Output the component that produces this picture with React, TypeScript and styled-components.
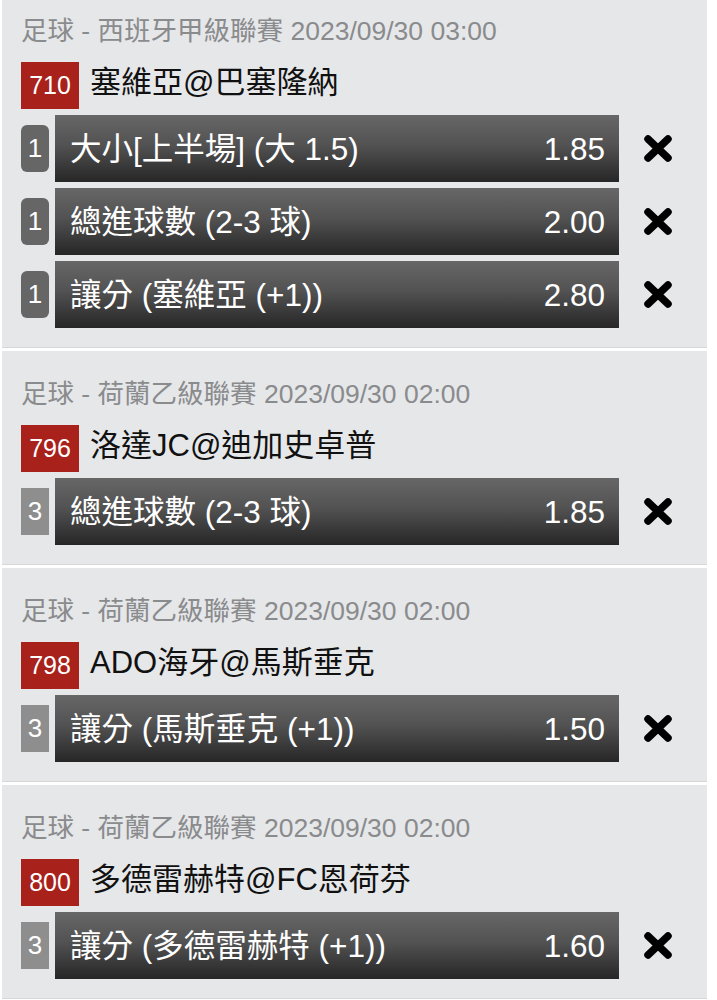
import React from 'react';
import styled, { createGlobalStyle } from 'styled-components';

type Pick = {
  grade: string;
  market: string;
  odds: string;
};

type Match = {
  league: string;
  time: string;
  code: string;
  teams: string;
  rounded: boolean;
  picks: Pick[];
};

const matches: Match[] = [
  {
    league: '足球 - 西班牙甲級聯賽',
    time: '2023/09/30 03:00',
    code: '710',
    teams: '塞維亞@巴塞隆納',
    rounded: true,
    picks: [
      { grade: '1', market: '大小[上半場] (大 1.5)', odds: '1.85' },
      { grade: '1', market: '總進球數 (2-3 球)', odds: '2.00' },
      { grade: '1', market: '讓分 (塞維亞 (+1))', odds: '2.80' }
    ]
  },
  {
    league: '足球 - 荷蘭乙級聯賽',
    time: '2023/09/30 02:00',
    code: '796',
    teams: '洛達JC@迪加史卓普',
    rounded: false,
    picks: [{ grade: '3', market: '總進球數 (2-3 球)', odds: '1.85' }]
  },
  {
    league: '足球 - 荷蘭乙級聯賽',
    time: '2023/09/30 02:00',
    code: '798',
    teams: 'ADO海牙@馬斯垂克',
    rounded: false,
    picks: [{ grade: '3', market: '讓分 (馬斯垂克 (+1))', odds: '1.50' }]
  },
  {
    league: '足球 - 荷蘭乙級聯賽',
    time: '2023/09/30 02:00',
    code: '800',
    teams: '多德雷赫特@FC恩荷芬',
    rounded: false,
    picks: [{ grade: '3', market: '讓分 (多德雷赫特 (+1))', odds: '1.60' }]
  }
];

const GlobalStyle = createGlobalStyle`
  body {
    margin: 0;
    background: #ffffff;
    font-family: "Liberation Sans", "Noto Sans CJK TC", sans-serif;
  }
`;

const StyledList = styled.div`
  display: flex;
  flex-direction: column;
  gap: 3px;
  margin-top: -12px;
  padding: 0 10px 0 2px;
`;

const StyledCard = styled.div`
  background: #e6e7e9;
  border-bottom: 1px solid #d6d7d9;
  padding: 24px 0 19px 19px;
  display: flex;
  flex-direction: column;
`;

const StyledLeague = styled.div`
  font-size: 26.5px;
  line-height: 38px;
  color: #8a8b8d;
  white-space: nowrap;
`;

const StyledMatchRow = styled.div`
  display: flex;
  align-items: center;
  height: 47px;
  margin-top: 12px;
  gap: 11px;
`;

const StyledCode = styled.div`
  background: #a8211b;
  color: #ffffff;
  width: 58px;
  height: 47px;
  display: flex;
  align-items: center;
  justify-content: center;
  font-size: 25px;
`;

const StyledTeams = styled.div`
  font-size: 31px;
  line-height: 36px;
  color: #111111;
  white-space: nowrap;
  padding-bottom: 6px;
`;

const StyledPicks = styled.div`
  display: flex;
  flex-direction: column;
  gap: 6px;
  margin-top: 6px;
`;

const StyledPickRow = styled.div`
  display: flex;
  align-items: center;
`;

const StyledGrade = styled.div<{ $rounded: boolean }>`
  width: 28px;
  height: 47px;
  flex-shrink: 0;
  margin-right: 6px;
  border-radius: ${(p) => (p.$rounded ? '6px' : '0')};
  background: ${(p) => (p.$rounded ? '#666666' : '#8e8e8e')};
  color: #ffffff;
  font-size: 26px;
  display: flex;
  align-items: center;
  justify-content: center;
`;

const StyledBar = styled.div`
  flex: 1;
  height: 67px;
  display: flex;
  align-items: center;
  justify-content: space-between;
  padding: 0 14px 0 15px;
  box-sizing: border-box;
  color: #ffffff;
  font-size: 31.5px;
  line-height: 40px;
  background: linear-gradient(#676767 0%, #525252 45%, #3a3a3a 75%, #262626 100%);
  white-space: nowrap;
`;

const StyledRemove = styled.div`
  width: 88px;
  flex-shrink: 0;
  display: flex;
  align-items: center;
  padding-left: 24px;
  box-sizing: border-box;
  cursor: pointer;
`;

const RemoveIcon = () => (
  <svg width="30" height="29" viewBox="0 0 30 29">
    <g stroke="#000000" strokeWidth="7.5" strokeLinecap="round">
      <line x1="5" y1="5" x2="25" y2="24" />
      <line x1="25" y1="5" x2="5" y2="24" />
    </g>
  </svg>
);

const App = () => {
  return (
    <>
      <GlobalStyle />
      <StyledList>
        {matches.map((m) => (
          <StyledCard key={m.code}>
            <StyledLeague>
              {m.league} {m.time}
            </StyledLeague>
            <StyledMatchRow>
              <StyledCode>{m.code}</StyledCode>
              <StyledTeams>{m.teams}</StyledTeams>
            </StyledMatchRow>
            <StyledPicks>
              {m.picks.map((p) => (
                <StyledPickRow key={p.market}>
                  <StyledGrade $rounded={m.rounded}>{p.grade}</StyledGrade>
                  <StyledBar>
                    <span>{p.market}</span>
                    <span>{p.odds}</span>
                  </StyledBar>
                  <StyledRemove>
                    <RemoveIcon />
                  </StyledRemove>
                </StyledPickRow>
              ))}
            </StyledPicks>
          </StyledCard>
        ))}
      </StyledList>
    </>
  );
};

export default App;
